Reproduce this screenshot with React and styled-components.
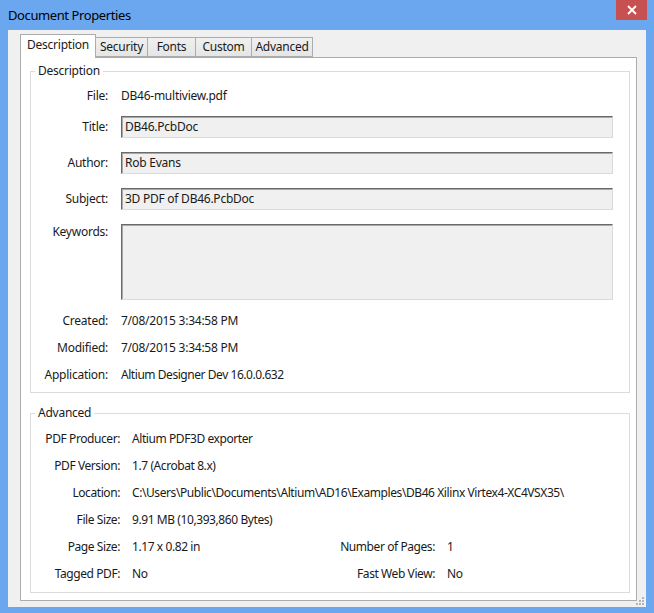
import React from 'react';
import styled, { createGlobalStyle } from 'styled-components';

const Global = createGlobalStyle`
  html, body { margin: 0; padding: 0; }
  body {
    background: #6ba7ef;
    font-family: "Noto Sans", "Open Sans", sans-serif;
    font-size: 12px;
    color: #1a1a1a;
  }
`;

const tabs = [
  { name: 'Description', w: 76 },
  { name: 'Security', w: 53 },
  { name: 'Fonts', w: 49 },
  { name: 'Custom', w: 57 },
  { name: 'Advanced', w: 62 },
];

const App = () => {
  return (
    <>
      <Global />
      <Frame>
        <TitleBar>
          <Caption>Document Properties</Caption>
          <CloseBtn>
            <svg width="10" height="10" viewBox="0 0 10 10">
              <path d="M1 1 L9 9 M9 1 L1 9" stroke="#fff" strokeWidth="1.8" />
            </svg>
          </CloseBtn>
        </TitleBar>
        <Client>
          <TabRow>
            {tabs.map((t, i) => (
              <Tab key={t.name} $active={i === 0} $w={t.w}>{t.name}</Tab>
            ))}
          </TabRow>
          <Panel>
            <Group>
              <Legend>Description</Legend>
              <Row $h={29}><Label>File:</Label><Value>DB46-multiview.pdf</Value></Row>
              <Row $h={36}><Label $lh={22}>Title:</Label><Field>DB46.PcbDoc</Field></Row>
              <Row $h={36}><Label $lh={22}>Author:</Label><Field>Rob Evans</Field></Row>
              <Row $h={36}><Label $lh={22}>Subject:</Label><Field>3D PDF of DB46.PcbDoc</Field></Row>
              <Row $h={88}><Label $lh={16}>Keywords:</Label><Field $h={76} /></Row>
              <Row $h={27}><Label>Created:</Label><Value>7/08/2015 3:34:58 PM</Value></Row>
              <Row $h={27}><Label>Modified:</Label><Value>7/08/2015 3:34:58 PM</Value></Row>
              <Row $h={26}><Label>Application:</Label><Value $tight>Altium Designer Dev 16.0.0.632</Value></Row>
            </Group>
            <Group $adv>
              <Legend>Advanced</Legend>
              <AdvGrid>
                <AdvLabel>PDF Producer:</AdvLabel><AdvValue $span>Altium PDF3D exporter</AdvValue>
                <AdvLabel>PDF Version:</AdvLabel><AdvValue $span>1.7 (Acrobat 8.x)</AdvValue>
                <AdvLabel>Location:</AdvLabel><AdvValue $span>C:\Users\Public\Documents\Altium\AD16\Examples\DB46 Xilinx Virtex4-XC4VSX35\</AdvValue>
                <AdvLabel>File Size:</AdvLabel><AdvValue $span>9.91 MB (10,393,860 Bytes)</AdvValue>
                <AdvLabel>Page Size:</AdvLabel><AdvValue>1.17 x 0.82 in</AdvValue>
                <AdvLabel>Number of Pages:</AdvLabel><AdvValue>1</AdvValue>
                <AdvLabel>Tagged PDF:</AdvLabel><AdvValue>No</AdvValue>
                <AdvLabel>Fast Web View:</AdvLabel><AdvValue>No</AdvValue>
              </AdvGrid>
            </Group>
          </Panel>
          <Grip>
            <svg width="10" height="10" viewBox="0 0 10 10" fill="#b4b4b4">
              <rect x="7" y="1" width="2" height="2" />
              <rect x="4" y="4" width="2" height="2" />
              <rect x="7" y="4" width="2" height="2" />
              <rect x="1" y="7" width="2" height="2" />
              <rect x="4" y="7" width="2" height="2" />
              <rect x="7" y="7" width="2" height="2" />
            </svg>
          </Grip>
        </Client>
      </Frame>
    </>
  );
};

export default App;

const Frame = styled.div`
  width: 654px;
  height: 613px;
  box-sizing: border-box;
  padding: 0 8px 8px 8px;
  display: flex;
  flex-direction: column;
`;

const TitleBar = styled.div`
  height: 30px;
  display: flex;
  justify-content: space-between;
  align-items: flex-start;
`;

const Caption = styled.div`
  font-family: "Noto Sans", sans-serif;
  font-size: 13px;
  line-height: 30px;
  color: #000;
  letter-spacing: -0.4px;
`;

const CloseBtn = styled.div`
  width: 31px;
  height: 20px;
  margin-right: -1px;
  background: #c75050;
  display: flex;
  align-items: center;
  justify-content: center;
`;

const Client = styled.div`
  position: relative;
  flex: 1;
  background: #f0f0f0;
  padding: 4px 9px 6px 12px;
  display: flex;
  flex-direction: column;
  letter-spacing: -0.25px;
`;

const TabRow = styled.div`
  display: flex;
  align-items: flex-end;
  height: 23px;
  position: relative;
  z-index: 1;
`;

const Tab = styled.div`
  box-sizing: border-box;
  width: ${p => p.$w}px;
  height: ${p => (p.$active ? 24 : 20)}px;
  margin-bottom: ${p => (p.$active ? -1 : 0)}px;
  margin-left: ${p => (p.$active ? 0 : -1)}px;
  border: 1px solid #acacac;
  border-bottom: ${p => (p.$active ? 'none' : '1px solid #acacac')};
  background: ${p => (p.$active ? '#fff' : 'linear-gradient(#f0f0f0, #e5e5e5)')};
  text-align: center;
  line-height: ${p => (p.$active ? 20 : 18)}px;
  &:first-child { margin-left: 0; }
`;

const Panel = styled.div`
  flex: 1;
  background: #fff;
  border: 1px solid #acacac;
  padding: 5px 6px 7px 9px;
  display: flex;
  flex-direction: column;
  gap: 12px;
`;

const Group = styled.fieldset`
  margin: 0;
  border: 1px solid #dcdcdc;
  padding: ${p => (p.$adv ? '4px 0 5px 0' : '8px 16px 0 0')};
  min-width: 0;
  flex: ${p => (p.$adv ? 1 : 'none')};
`;

const Legend = styled.legend`
  padding: 0 3px;
  margin-left: 4px;
  line-height: 16px;
  color: #1a1a1a;
`;

const Row = styled.div`
  height: ${p => p.$h}px;
  display: grid;
  grid-template-columns: 77px 1fr;
  column-gap: 13px;
  align-items: start;
`;

const Label = styled.div`
  text-align: right;
  line-height: ${p => p.$lh || 18}px;
`;

const Value = styled.div`
  line-height: 18px;
  letter-spacing: ${p => (p.$tight ? '-0.45px' : 'inherit')};
`;

const Field = styled.div`
  box-sizing: border-box;
  height: ${p => p.$h || 22}px;
  background: #f0f0f0;
  border-top: 1px solid #6a6a6a;
  border-left: 1px solid #6a6a6a;
  border-right: 1px solid #dadada;
  border-bottom: 1px solid #dadada;
  box-shadow: inset 1px 1px 0 #a8a8a8;
  padding: 0 3px;
  line-height: 19px;
`;

const AdvGrid = styled.div`
  display: grid;
  grid-template-columns: 89px 195px 96px 1fr;
  grid-auto-rows: 27px;
  column-gap: 12px;
  align-items: center;
  letter-spacing: -0.42px;
`;

const AdvLabel = styled.div`
  text-align: right;
  white-space: nowrap;
`;

const AdvValue = styled.div`
  white-space: nowrap;
  grid-column: ${p => (p.$span ? 'span 3' : 'auto')};
`;

const Grip = styled.div`
  position: absolute;
  right: 1px;
  bottom: 1px;
  width: 10px;
  height: 10px;
  display: flex;
`;
